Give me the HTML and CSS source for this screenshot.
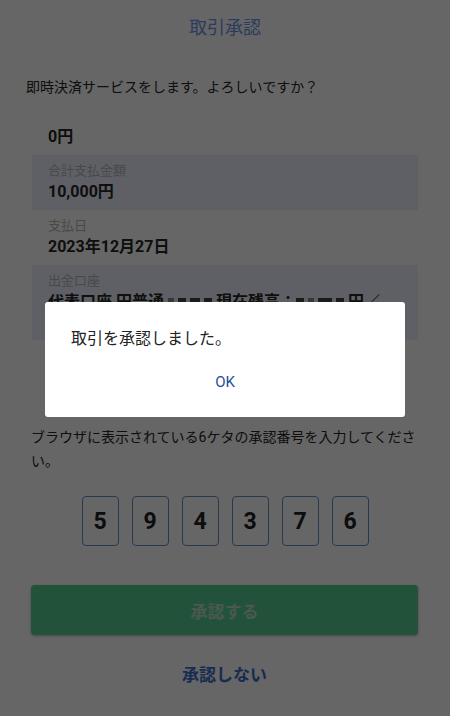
FILE: index.html
```html
<!DOCTYPE html>
<html lang="ja">
<head>
<meta charset="utf-8">
<link rel="stylesheet" href="styles.css">
</head>
<body>
<div class="page">
  <header class="title">取引承認</header>
  <p class="question">即時決済サービスをします。よろしいですか？</p>
  <div class="rows">
    <div class="row">
      <div class="label">&nbsp;</div>
      <div class="value">0円</div>
    </div>
    <div class="row alt">
      <div class="label">合計支払金額</div>
      <div class="value">10,000円</div>
    </div>
    <div class="row">
      <div class="label">支払日</div>
      <div class="value">2023年12月27日</div>
    </div>
    <div class="row alt last">
      <div class="label">出金口座</div>
      <div class="value">代表口座 円普通 <span class="mask m1"></span><span class="mask m2"></span><span class="mask m3"></span><span class="mask m2"></span>現在残高：<span class="mask m2"></span><span class="mask m1"></span><span class="mask m4"></span><span class="mask m2"></span>円／</div>
    </div>
  </div>
  <p class="instruction">ブラウザに表示されている6ケタの承認番号を入力してください。</p>
  <div class="digits">
    <div class="digit">5</div>
    <div class="digit">9</div>
    <div class="digit">4</div>
    <div class="digit">3</div>
    <div class="digit">7</div>
    <div class="digit">6</div>
  </div>
  <div class="actions">
    <button class="approve">承認する</button>
    <button class="reject">承認しない</button>
  </div>
</div>
<div class="overlay">
  <div class="dialog">
    <p class="dialog-text">取引を承認しました。</p>
    <div class="dialog-actions"><span class="ok">OK</span></div>
  </div>
</div>
</body>
</html>
```

FILE: styles.css
```css
* { box-sizing: border-box; }
html, body {
  margin: 0;
  padding: 0;
  background: #ffffff;
  font-family: Roboto, "Noto Sans CJK JP", sans-serif;
  color: #262626;
}
.page {
  width: 450px;
  height: 716px;
  overflow: hidden;
}
.title {
  height: 56px;
  line-height: 56px;
  text-align: center;
  font-size: 18px;
  color: #6f95e8;
}
.question {
  margin: 0 0 0 26px;
  padding-top: 19px;
  line-height: 24px;
  font-size: 14px;
  height: 44px;
  color: #262626;
}
.rows {
  margin: 0 32px 0 32px;
}
.row {
  height: 55px;
  padding: 7px 16px 6px;
}
.row.alt { background: #edf0fd; }
.row.last { height: 75px; }
.label {
  font-size: 13px;
  line-height: 18px;
  color: #b5b5b8;
}
.value {
  font-size: 16px;
  line-height: 24px;
  font-weight: 700;
  color: #262626;
  white-space: nowrap;
}
.mask {
  display: inline-block;
  height: 10px;
  margin-right: 4px;
  background: #444;
  vertical-align: middle;
}
.m1 { width: 6px; background: #8a8a8a; }
.m2 { width: 8px; }
.m3 { width: 10px; }
.m4 { width: 14px; }
.instruction {
  margin: 85px 32px 0 31px;
  font-size: 14px;
  line-height: 24px;
  color: #262626;
}
.digits {
  display: flex;
  justify-content: center;
  gap: 13px;
  margin-top: 23px;
}
.digit {
  width: 37px;
  height: 50px;
  border: 1.5px solid #6490c4;
  border-radius: 4px;
  display: flex;
  align-items: center;
  justify-content: center;
  font-size: 23px;
  font-weight: 700;
  color: #222;
}
.actions {
  margin: 39px 32px 0 31px;
  display: flex;
  flex-direction: column;
  align-items: stretch;
}
.approve {
  height: 50px;
  border: none;
  border-radius: 4px;
  background: #55cf91;
  color: #b8dcc4;
  font-family: inherit;
  font-size: 17px;
  font-weight: 700;
  box-shadow: 0 1px 3px rgba(0,0,0,0.3);
}
.reject {
  margin-top: 24px;
  height: 28px;
  border: none;
  background: transparent;
  color: #3d6cc8;
  font-family: inherit;
  font-size: 17px;
  font-weight: 700;
}
.overlay {
  position: fixed;
  inset: 0;
  background: rgba(0,0,0,0.6);
}
.dialog {
  position: absolute;
  left: 45px;
  top: 302px;
  width: 360px;
  height: 115px;
  background: #fff;
  border-radius: 3px;
  padding: 25px 26px 0;
}
.dialog-text {
  margin: 0;
  font-size: 16px;
  line-height: 24px;
  color: #222;
}
.dialog-actions {
  margin-top: 21px;
  text-align: center;
  line-height: 20px;
}
.ok {
  font-size: 15px;
  color: #1f4f99;
}
```
